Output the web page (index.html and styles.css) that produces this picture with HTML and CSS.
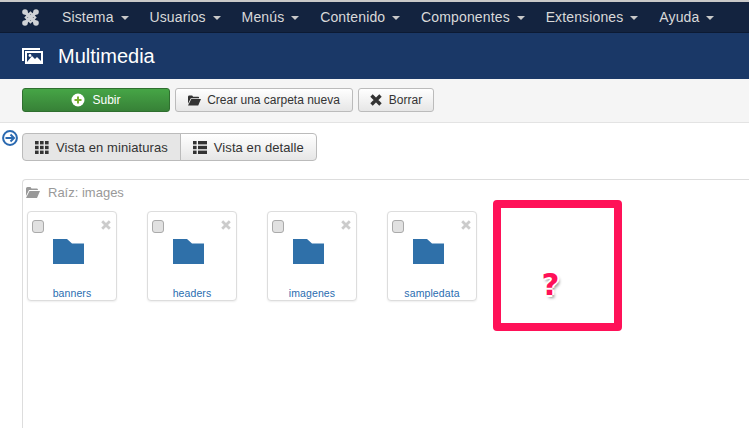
FILE: index.html
```html
<!DOCTYPE html>
<html lang="es">
<head>
  <meta charset="UTF-8" />
  <title>Multimedia</title>
  <link rel="stylesheet" href="styles.css">
</head>
<body>
  <nav class="navbar">
    <svg class="logo" width="17" height="17" viewBox="0 0 17 17">
      <path fill="none" stroke="#cfd2d6" stroke-width="3.200" d="M3 3L14 14M14 3L3 14"/>
      <path fill="none" stroke="#cfd2d6" stroke-width="2.200" d="M8.500 3.800L13.200 8.500L8.500 13.200L3.800 8.500Z"/>
      <g fill="#cfd2d6">
        <circle cx="3" cy="3" r="2.800"/>
        <circle cx="14" cy="3" r="2.800"/>
        <circle cx="3" cy="14" r="2.800"/>
        <circle cx="14" cy="14" r="2.800"/>
      </g>
    </svg>
    <ul class="menu">
      <li>Sistema <span class="caret"></span></li>
      <li>Usuarios <span class="caret"></span></li>
      <li>Menús <span class="caret"></span></li>
      <li>Contenido <span class="caret"></span></li>
      <li>Componentes <span class="caret"></span></li>
      <li>Extensiones <span class="caret"></span></li>
      <li>Ayuda <span class="caret"></span></li>
    </ul>
  </nav>

  <header class="title-bar">
    <svg width="21" height="16" viewBox="0 0 21 16">
      <path fill="#fff" d="M0 0H18V2H2V13H0Z"/>
      <path fill="#fff" fill-rule="evenodd" d="M3 3H21V16H3ZM5 5V14H19V5Z"/>
      <path fill="#fff" d="M5 14L10 8L13 11L15 9L19 13V14Z"/>
      <circle fill="#fff" cx="8" cy="7.500" r="1.400"/>
    </svg>
    <h1>Multimedia</h1>
  </header>

  <div class="toolbar">
    <button class="btn btn-green">
      <svg width="14" height="14" viewBox="0 0 14 14">
        <circle cx="7" cy="7" r="6.500" fill="#fff"/>
        <path d="M7 3.500V10.500M3.500 7H10.500" stroke="#7cae2e" stroke-width="2"/>
      </svg>
      Subir
    </button>
    <button class="btn btn-new">
      <svg width="13" height="11" viewBox="0 0 14 11">
        <path fill="#333" d="M0 1.500Q0 0 1.500 0H4.500L5.500 1.500H11Q12 1.500 12 3H3L0 9Z"/>
        <path fill="#333" d="M3.500 4H14L11 11H0Z"/>
      </svg>
      Crear una carpeta nueva
    </button>
    <button class="btn btn-del">
      <svg width="12" height="12" viewBox="0 0 12 12">
        <path d="M1.500 1.500L10.500 10.500M10.500 1.500L1.500 10.500" stroke="#333" stroke-width="3.400"/>
      </svg>
      Borrar
    </button>
  </div>

  <main class="content">
    <svg class="toggle" width="16" height="16" viewBox="0 0 16 16">
      <circle cx="8" cy="8" r="6.900" fill="#fff" stroke="#2a69b0" stroke-width="2"/>
      <path d="M3.500 8H11.500M8.500 4.500L12 8L8.500 11.500" fill="none" stroke="#2a69b0" stroke-width="2"/>
    </svg>
    <div class="view-switch">
      <button class="view-btn active">
        <svg width="14" height="13" viewBox="0 0 14 13">
          <g fill="#333">
            <rect x="0" y="0" width="3.600" height="3.400"/><rect x="5" y="0" width="3.600" height="3.400"/><rect x="10" y="0" width="3.600" height="3.400"/>
            <rect x="0" y="4.800" width="3.600" height="3.400"/><rect x="5" y="4.800" width="3.600" height="3.400"/><rect x="10" y="4.800" width="3.600" height="3.400"/>
            <rect x="0" y="9.600" width="3.600" height="3.400"/><rect x="5" y="9.600" width="3.600" height="3.400"/><rect x="10" y="9.600" width="3.600" height="3.400"/>
          </g>
        </svg>
        Vista en miniaturas
      </button>
      <button class="view-btn">
        <svg width="14" height="13" viewBox="0 0 14 13">
          <g fill="#333">
            <rect x="0" y="0" width="3.600" height="3.400"/><rect x="5" y="0" width="9" height="3.400"/>
            <rect x="0" y="4.800" width="3.600" height="3.400"/><rect x="5" y="4.800" width="9" height="3.400"/>
            <rect x="0" y="9.600" width="3.600" height="3.400"/><rect x="5" y="9.600" width="9" height="3.400"/>
          </g>
        </svg>
        Vista en detalle
      </button>
    </div>

    <section class="browser">
      <div class="crumb">
        <svg width="14" height="11" viewBox="0 0 14 11">
          <path fill="#999" d="M0 1.500Q0 0 1.500 0H4.500L5.500 1.500H11Q12 1.500 12 3H3L0 9Z"/>
          <path fill="#999" d="M3.500 4H14L11 11H0Z"/>
        </svg>
        Raíz: images
      </div>
      <div class="thumbs">
        <div class="thumb">
          <div class="thumb-top">
            <span class="check"></span>
            <svg width="10" height="10" viewBox="0 0 10 10"><path d="M1.200 1.200L8.800 8.800M8.800 1.200L1.200 8.800" stroke="#ccc" stroke-width="2.800"/></svg>
          </div>
          <svg class="folder" width="31" height="25" viewBox="0 0 31 25"><path fill="#2f70a9" d="M0 0H14L19 4.500H31V25H0Z"/></svg>
          <a class="name">banners</a>
        </div>
        <div class="thumb">
          <div class="thumb-top">
            <span class="check"></span>
            <svg width="10" height="10" viewBox="0 0 10 10"><path d="M1.200 1.200L8.800 8.800M8.800 1.200L1.200 8.800" stroke="#ccc" stroke-width="2.800"/></svg>
          </div>
          <svg class="folder" width="31" height="25" viewBox="0 0 31 25"><path fill="#2f70a9" d="M0 0H14L19 4.500H31V25H0Z"/></svg>
          <a class="name">headers</a>
        </div>
        <div class="thumb">
          <div class="thumb-top">
            <span class="check"></span>
            <svg width="10" height="10" viewBox="0 0 10 10"><path d="M1.200 1.200L8.800 8.800M8.800 1.200L1.200 8.800" stroke="#ccc" stroke-width="2.800"/></svg>
          </div>
          <svg class="folder" width="31" height="25" viewBox="0 0 31 25"><path fill="#2f70a9" d="M0 0H14L19 4.500H31V25H0Z"/></svg>
          <a class="name">imagenes</a>
        </div>
        <div class="thumb">
          <div class="thumb-top">
            <span class="check"></span>
            <svg width="10" height="10" viewBox="0 0 10 10"><path d="M1.200 1.200L8.800 8.800M8.800 1.200L1.200 8.800" stroke="#ccc" stroke-width="2.800"/></svg>
          </div>
          <svg class="folder" width="31" height="25" viewBox="0 0 31 25"><path fill="#2f70a9" d="M0 0H14L19 4.500H31V25H0Z"/></svg>
          <a class="name">sampledata</a>
        </div>
      </div>
    </section>

    <div class="marker"><span class="mark">?</span></div>
  </main>
</body>
</html>
```

FILE: styles.css
```css
* {
  margin: 0;
  padding: 0;
  box-sizing: border-box;
}
html, body {
  height: 100%;
  overflow: hidden;
}
body {
  font-family: "Liberation Sans", Arial, sans-serif;
  background: #fff;
  color: #333;
  display: flex;
  flex-direction: column;
}
/* Barra superior */
.navbar {
  height: 33px;
  background: #13233f;
  border-top: 2px solid #c9c9c9;
  border-bottom: 1px solid #0c1a33;
  display: flex;
  align-items: center;
  padding-left: 22px;
  flex-shrink: 0;
}
.logo {
  flex-shrink: 0;
}
.menu {
  display: flex;
  list-style: none;
  margin-left: 23px;
  gap: 20.800px;
  color: #d9d9d9;
  font-size: 14px;
  letter-spacing: 0.14px;
  white-space: nowrap;
}
.caret {
  display: inline-block;
  width: 0;
  height: 0;
  margin-left: 3px;
  vertical-align: middle;
  border-top: 4px solid #c9c9c9;
  border-left: 4px solid transparent;
  border-right: 4px solid transparent;
}
/* Titulo */
.title-bar {
  height: 46px;
  background: #1a3867;
  display: flex;
  align-items: center;
  gap: 15px;
  padding-left: 22px;
  flex-shrink: 0;
}
.title-bar h1 {
  color: #fff;
  font-size: 20px;
  font-weight: 400;
}
/* Botones */
.toolbar {
  height: 44px;
  background: #f5f5f5;
  border-bottom: 1px solid #e3e3e3;
  display: flex;
  align-items: flex-start;
  gap: 5px;
  padding: 9px 0 0 22px;
  flex-shrink: 0;
}
.btn {
  height: 24px;
  display: flex;
  align-items: center;
  justify-content: center;
  gap: 7px;
  font-family: inherit;
  font-size: 12px;
  color: #333;
  background: linear-gradient(#fff, #e6e6e6);
  border: 1px solid #bbb;
  border-radius: 3px;
}
.btn-green {
  width: 148px;
  color: #fff;
  background: linear-gradient(#46a546, #378137);
  border-color: #2f6f2f;
}
.btn-new {
  width: 178px;
  gap: 6px;
}
.btn-del {
  width: 76px;
}
.content {
  position: relative;
  flex: 1;
  min-height: 0;
  display: flex;
  flex-direction: column;
  align-items: flex-start;
  padding: 10px 0 0 22px;
}
.toggle {
  position: absolute;
  left: 2px;
  top: 7px;
}
.view-switch {
  display: flex;
  height: 28px;
}
.view-btn {
  display: flex;
  align-items: center;
  gap: 7px;
  padding: 0 12px;
  font-family: inherit;
  font-size: 13px;
  letter-spacing: 0.08px;
  color: #333;
  background: linear-gradient(#fff, #e6e6e6);
  border: 1px solid #bbb;
  border-radius: 0 4px 4px 0;
  margin-left: -1px;
}
.view-btn.active {
  background: #e6e6e6;
  border-radius: 4px 0 0 4px;
  margin-left: 0;
}
/* Explorador */
.browser {
  margin-top: 18px;
  flex: 1;
  width: 100%;
  min-height: 0;
  border: 1px solid #ddd;
  border-right: 0;
  border-bottom: 0;
  border-top-left-radius: 4px;
  padding: 5px 0 0 4px;
}
.crumb {
  display: flex;
  align-items: center;
  gap: 8px;
  height: 15px;
  margin-left: -1px;
  font-size: 13px;
  color: #999;
}
.thumbs {
  display: flex;
  gap: 30px;
  margin-top: 11px;
}
.thumb {
  width: 90px;
  height: 90px;
  border: 1px solid #ddd;
  border-radius: 4px;
  background: #fff;
  box-shadow: 0 1px 2px rgba(0,0,0,0.07);
  display: flex;
  flex-direction: column;
  align-items: center;
}
.thumb-top {
  width: 100%;
  display: flex;
  justify-content: space-between;
  padding: 8px 5px 0 4px;
}
.check {
  width: 12px;
  height: 13px;
  background: #e1e1e1;
  border: 1px solid #aaa;
  border-radius: 3px;
}
.folder {
  margin: 6px 7px 0 0;
}
.name {
  margin-top: 23px;
  font-size: 10.500px;
  letter-spacing: 0.1px;
  color: #2a6db0;
}
/* Anotacion sobre la captura */
.marker {
  position: absolute;
  left: 493px;
  top: 77px;
  width: 129px;
  height: 131px;
  border: 8px solid #ff1158;
  border-radius: 4px;
  background: #fff;
  display: flex;
  align-items: flex-end;
  justify-content: center;
  padding: 0 14px 23px 0;
}
.mark {
  color: #ff1158;
  font-family: "DejaVu Sans", sans-serif;
  font-size: 31px;
  line-height: 32px;
  font-weight: 700;
  text-shadow: 2px 0 0 #fff, -2px 0 0 #fff, 0 2px 0 #fff, 0 -2px 0 #fff, 2px 3px 3px rgba(0,0,0,0.4);
}
```
